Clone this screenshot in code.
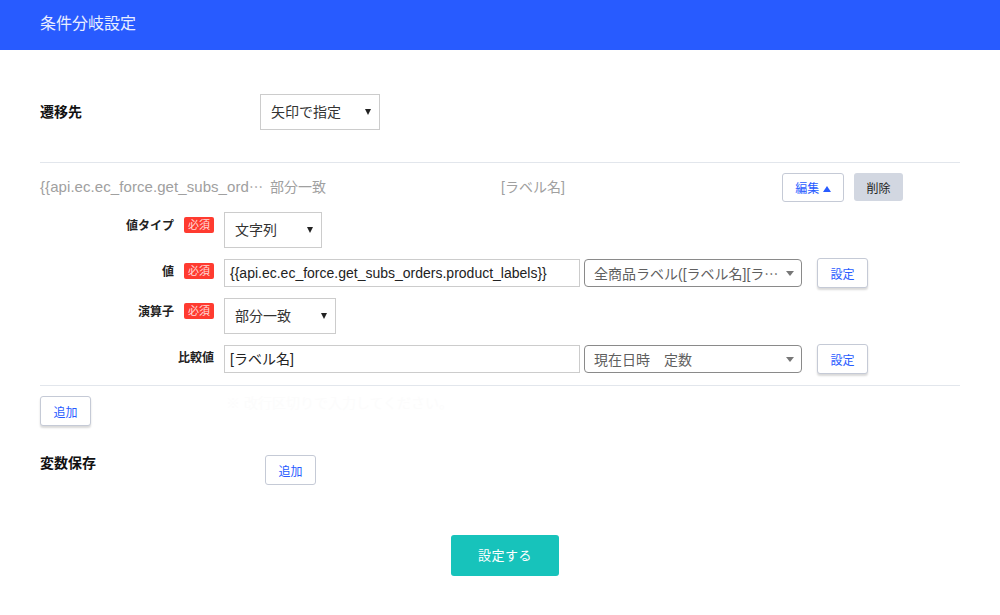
<div class="page">
  <header class="head">条件分岐設定</header>
  <main class="body">
    <section class="dest">
      <div class="dest-label">遷移先</div>
      <div class="sel w120"><span>矢印で指定</span><i class="tri"></i></div>
    </section>

    <section class="cond">
      <div class="summary">
        <span class="s1"><span class="lat">{'{{'}api.ec.ec_force.get_subs_ord</span><span class="cjk" lang="ja">…</span></span>
        <span class="s2">部分一致</span>
        <span class="s3">[ラベル名]</span>
        <button class="btn edit">編集 <i class="up"></i></button>
        <button class="del">削除</button>
      </div>

      <div class="row r1">
        <div class="lab">値タイプ</div><span class="req">必須</span>
        <div class="sel w98"><span>文字列</span><i class="tri"></i></div>
      </div>
      <div class="row r2">
        <div class="lab">値</div><span class="req">必須</span>
        <div class="inp">{'{{'}api.ec.ec_force.get_subs_orders.product_labels{'}}'}</div>
        <div class="rsel"><span>全商品ラベル([ラベル名][ラ<span class="cjk" lang="ja">…</span></span><i class="tri2"></i></div>
        <button class="btn set">設定</button>
      </div>
      <div class="row r3">
        <div class="lab">演算子</div><span class="req">必須</span>
        <div class="sel w112"><span>部分一致</span><i class="tri"></i></div>
      </div>
      <div class="row r4">
        <div class="lab wide">比較値</div>
        <div class="inp">[ラベル名]</div>
        <div class="rsel"><span>現在日時　定数</span><i class="tri2"></i></div>
        <button class="btn set">設定</button>
      </div>
    </section>

    <div class="add1">
      <button class="btn add shadow">追加</button>
      <span class="ghost">※ 改行区切りで入力してください。</span>
    </div>

    <section class="vars">
      <div class="var-label">変数保存</div>
      <button class="btn add">追加</button>
    </section>

    <div class="submit-wrap"><button class="submit">設定する</button></div>
  </main>
</div>

<style>
  :global(body) {
    margin: 0;
    background: #fff;
    font-family: "Liberation Sans", "Noto Sans CJK JP", sans-serif;
  }
  .page { width: 1000px; height: 615px; overflow: hidden; }
  .head {
    height: 50px;
    background: #285bff;
    color: #e8eeff;
    font-size: 16px;
    line-height: 48px;
    padding-left: 40px;
  }
  .body { padding: 0 40px; }
  .cjk { font-family: "Noto Sans CJK JP", sans-serif; }
  .lat { font-size: 15px; letter-spacing: .07px; }
  .dest { display: flex; align-items: center; padding-top: 44px; }
  .dest-label { width: 220px; font-size: 14px; font-weight: 700; color: #111; padding-bottom: 2px; }
  .sel {
    height: 36px;
    box-sizing: border-box;
    border: 1px solid #ccc;
    display: flex;
    align-items: center;
    justify-content: space-between;
    padding: 0 8px 0 10px;
    font-size: 14px;
    color: #333;
  }
  .sel span { padding-bottom: 2px; }
  .w120 { width: 120px; }
  .w98 { width: 98px; }
  .w112 { width: 112px; }
  .tri {
    width: 0; height: 0;
    border-left: 3px solid transparent;
    border-right: 3px solid transparent;
    border-top: 6px solid #222;
  }
  .cond {
    margin-top: 32px;
    border-top: 1px solid #e2e6ec;
    border-bottom: 1px solid #e2e6ec;
    height: 222px;
  }
  .summary { display: flex; align-items: center; height: 29px; margin-top: 10px; font-size: 14px; color: #a0a0a0; }
  .summary > span { padding-bottom: 4px; white-space: nowrap; }
  .s1 { width: 230px; }
  .s2 { width: 231px; }
  .s3 { width: 281px; }
  button { font-family: inherit; cursor: pointer; }
  .btn {
    box-sizing: border-box;
    background: #fff;
    border: 1px solid #c5cad6;
    border-radius: 3px;
    color: #285bff;
    font-size: 12px;
    padding: 0;
  }
  .edit { width: 62px; height: 29px; }
  .up {
    display: inline-block;
    width: 0; height: 0;
    border-left: 4px solid transparent;
    border-right: 4px solid transparent;
    border-bottom: 6px solid #285bff;
    vertical-align: 1px;
  }
  .del {
    width: 49px; height: 28px;
    margin: 0 0 1px 10px;
    background: #d2d7e1;
    border: 0;
    border-radius: 3px;
    color: #222;
    font-size: 12px;
    padding: 0;
  }
  .row { display: flex; }
  .lab {
    width: 134px;
    text-align: right;
    font-size: 12px;
    font-weight: 700;
    color: #222;
    line-height: 16px;
    padding-top: 6px;
  }
  .lab.wide { width: 174px; margin-right: 10px; }
  .req {
    width: 30px; height: 16px;
    margin: 5px 10px 0 10px;
    background: #ff3b30;
    border-radius: 2px;
    color: #ffdcd9;
    font-size: 11px;
    line-height: 16px;
    text-align: center;
  }
  .r1, .r2, .r3, .r4 { margin-top: 10px; }
  .r2, .r4 { height: 30px; }
  .inp {
    box-sizing: border-box;
    width: 356px; height: 28px;
    margin-top: 1px;
    border: 1px solid #ccc;
    padding: 0 5px;
    font-size: 14px;
    line-height: 26px;
    color: #222;
    white-space: nowrap;
  }
  .rsel {
    box-sizing: border-box;
    width: 218px; height: 28px;
    margin: 1px 15px 0 4px;
    border: 1px solid #8a8a8a;
    border-radius: 4px;
    padding: 0 9px;
    display: flex;
    align-items: center;
    justify-content: space-between;
    font-size: 14px;
    color: #5f5f5f;
    white-space: nowrap;
  }
  .tri2 {
    width: 0; height: 0;
    border-left: 4.5px solid transparent;
    border-right: 4.5px solid transparent;
    border-top: 5px solid #777;
    margin-right: -2px;
  }
  .set { width: 51px; height: 30px; box-shadow: 0 2px 2px rgba(0,0,0,.15); }
  .add1 { display: flex; margin-top: 10px; height: 30px; }
  .add { width: 51px; height: 30px; }
  .shadow { box-shadow: 0 2px 2px rgba(0,0,0,.15); }
  .ghost { margin-left: 135px; font-size: 14px; line-height: 14px; color: #fcfcfc; white-space: nowrap; }
  .vars { display: flex; margin-top: 29px; }
  .var-label { width: 225px; font-size: 14px; font-weight: 700; color: #111; line-height: 16px; }
  .submit-wrap { display: flex; justify-content: center; margin-top: 50px; padding-left: 10px; }
  .submit {
    width: 108px; height: 41px;
    background: #17c3bb;
    border: 0;
    border-radius: 3px;
    color: #fff;
    font-size: 13px;
    letter-spacing: .5px;
    padding: 0 0 2px;
  }
</style>
